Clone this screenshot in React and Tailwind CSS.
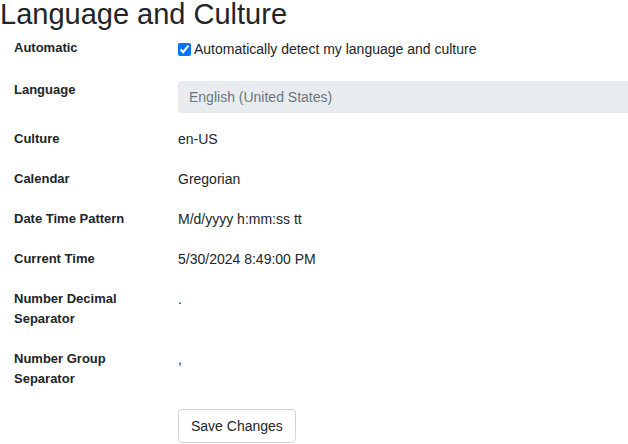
export default function App() {
  const F = { fontFamily: '"Liberation Sans", Arial, sans-serif' };
  const Row = ({ label, h, children }) => (
    <div className="flex" style={{ height: h }}>
      <div className="w-[178px] shrink-0 pl-[14px] text-[13px] font-bold leading-[20px] text-[#212529]">{label}</div>
      <div className="flex-1 min-w-0 text-[14px] leading-[20px] text-[#212529]">{children}</div>
    </div>
  );
  return (
    <div className="w-[628px] h-[444px] bg-white overflow-hidden" style={F}>
      <div className="h-[39px] text-[29px] leading-[30px] text-[#212529] -mt-[1px]">Language and Culture</div>
      <Row label="Automatic" h={42}>
        <label className="flex items-center gap-[3px] pt-[1px]">
          <input type="checkbox" defaultChecked className="w-[13px] h-[13px] m-0 accent-[#0075ff]" />
          <span>Automatically detect my language and culture</span>
        </label>
      </Row>
      <Row label="Language" h={49}>
        <div className="mt-[1px] h-[32px] bg-[#e9ecef] rounded-l-[4px] flex items-center justify-between pl-[11px] pr-[1px] text-[#6c757d] text-[14px] w-[460px]">
          <span>English (United States)</span>
          <span className="text-[9px] text-[#555]">▼</span>
        </div>
      </Row>
      <Row label="Culture" h={40}>en-US</Row>
      <Row label="Calendar" h={40}>Gregorian</Row>
      <Row label="Date Time Pattern" h={40}>M/d/yyyy h:mm:ss tt</Row>
      <Row label="Current Time" h={40}>5/30/2024 8:49:00 PM</Row>
      <Row label={<>Number Decimal<br />Separator</>} h={60}>.</Row>
      <Row label={<>Number Group<br />Separator</>} h={60}>,</Row>
      <div className="pl-[178px]">
        <button className="h-[34px] px-[12px] border border-[#ced4da] rounded-[4px] bg-white text-[14px] text-[#212529]">Save Changes</button>
      </div>
    </div>
  );
}
